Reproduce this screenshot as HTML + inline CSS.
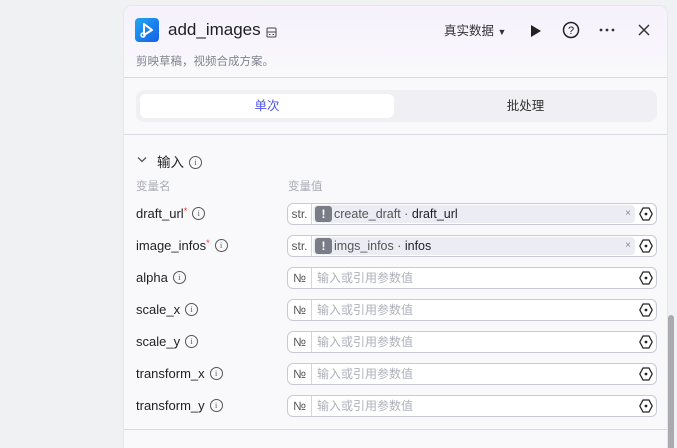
<!DOCTYPE html>
<html><head><meta charset="utf-8">
<style>
*{margin:0;padding:0;box-sizing:border-box}
html,body{width:677px;height:448px;overflow:hidden}
body{background:#f0f1f3;font-family:"Liberation Sans","Noto Sans CJK SC",sans-serif;position:relative;color:#1d1f24}
.panel{position:absolute;left:123px;top:5px;width:545px;height:443px;background:#f9f9fb;border-radius:9px 9px 0 0;border:1px solid #e6e7ec;border-bottom:none;overflow:hidden}
.hdr{position:absolute;left:0;top:0;width:100%;height:72px;background:linear-gradient(180deg,#f6f1fc,#f9f9fb)}
.a{position:absolute;white-space:nowrap}
.line{position:absolute;left:0;width:100%;height:1px;background:#d9dae3}
.lbl{font-size:13px;color:#1d1f24}
.info{display:inline-block;position:relative;top:-1px;width:13px;height:13px;border:1px solid #555;border-radius:50%;font-size:8px;line-height:11px;text-align:center;color:#555;vertical-align:middle;margin-left:5px;font-family:"Liberation Serif",serif}
.box{position:absolute;left:163px;width:370px;height:22px;border:1px solid #c9cad6;border-radius:6px;background:#fff}
.tp{position:absolute;left:0;top:0;width:24px;height:20px;border-right:1px solid #d4d5de;font-size:12px;color:#555;text-align:center;line-height:20px}
.ph{position:absolute;left:29px;top:0;line-height:20px;font-size:12px;color:#aeb0bb}
.tgt{position:absolute;right:3px;top:3px;width:14px;height:14px}
.chip{position:absolute;left:25px;top:1px;width:322px;height:18px;background:#ecedf4;border-radius:4px}
.ex{position:absolute;left:2px;top:1px;width:17px;height:16px;background:#7a7d88;border-radius:3px;color:#fff;font-size:12px;font-weight:bold;text-align:center;line-height:16px}
.ct{position:absolute;left:21px;top:0;line-height:18px;font-size:12.5px;color:#555}
.ct b{color:#1d1f24;font-weight:normal}
.x{position:absolute;right:4px;top:0;line-height:18px;font-size:10px;color:#888}
</style></head><body>
<div class="panel">
<div class="hdr"></div>
<svg class="a" style="left:11px;top:12px" width="24" height="24" viewBox="0 0 24 24"><defs><linearGradient id="g" x1="0" y1="0" x2="1" y2="1"><stop offset="0" stop-color="#22a6f2"/><stop offset="1" stop-color="#1560e8"/></linearGradient></defs><rect width="24" height="24" rx="4" fill="url(#g)"/><path d="M9 6 L17 12 L9 17 Z" fill="none" stroke="#fff" stroke-width="2" stroke-linejoin="round"/><circle cx="8" cy="17" r="2" fill="none" stroke="#fff" stroke-width="1.5"/></svg>
<div class="a" style="left:44px;top:14px;font-size:17px;color:#1d1f24">add_images</div>
<svg class="a" style="left:142px;top:21px" width="11" height="11" viewBox="0 0 11 11"><rect x="1" y="1" width="9" height="9" rx="1" fill="none" stroke="#444" stroke-width="1"/><path d="M1 5H10M3 7.5h1.5M6.5 7.5H8" stroke="#444" stroke-width="1"/></svg>
<div class="a" style="left:12px;top:47px;font-size:11.5px;color:#80838e">剪映草稿，视频合成方案。</div>
<div class="a" style="left:320px;top:14px;font-size:12.5px;color:#333">真实数据 <span style="font-size:9px">▼</span></div>
<svg class="a" style="left:406px;top:18px" width="12" height="14"><path d="M1 1 L11 7 L1 13Z" fill="#222"/></svg>
<svg class="a" style="left:438px;top:15px" width="18" height="18"><circle cx="9" cy="9" r="7.5" fill="none" stroke="#222" stroke-width="1.5"/><text x="9" y="13" font-size="11" text-anchor="middle" fill="#222" font-family="Liberation Sans">?</text></svg>
<svg class="a" style="left:475px;top:22px" width="16" height="4"><circle cx="2" cy="2" r="1.4" fill="#333"/><circle cx="8" cy="2" r="1.4" fill="#333"/><circle cx="14" cy="2" r="1.4" fill="#333"/></svg>
<svg class="a" style="left:513px;top:17px" width="14" height="14"><path d="M2 2L12 12M12 2L2 12" stroke="#333" stroke-width="1.5"/></svg>
<div class="line" style="top:71px"></div>
<div class="a" style="left:12px;top:84px;width:521px;height:32px;background:#f0f0f4;border-radius:8px"></div>
<div class="a" style="left:16px;top:88px;width:254px;height:24px;background:#fff;border-radius:6px;text-align:center;line-height:24px;font-size:12.5px;color:#4d53e8">单次</div>
<div class="a" style="left:270px;top:88px;width:263px;height:24px;text-align:center;line-height:24px;font-size:12.5px;color:#333">批处理</div>
<div class="line" style="top:128px"></div>
<svg class="a" style="left:13px;top:150px" width="10" height="7"><path d="M1 1.5L5 5.5L9 1.5" fill="none" stroke="#555" stroke-width="1.3"/></svg>
<div class="a lbl" style="left:33px;top:145px;font-size:13.5px">输入<span class="info">i</span></div>
<div class="a" style="left:12px;top:172px;font-size:11.5px;color:#a9abb5">变量名</div>
<div class="a" style="left:164px;top:172px;font-size:11.5px;color:#a9abb5">变量值</div>

<div class="a lbl" style="left:12px;top:200px">draft_url<span style="color:#e33;font-size:9px;vertical-align:4px">*</span><span class="info">i</span></div>
<div class="box" style="top:197px"><div class="tp">str.</div><div class="chip"><div class="ex">!</div><div class="ct">create_draft · <b>draft_url</b></div><div class="x">×</div></div><svg class="tgt" viewBox="0 0 14 14"><path d="M4 1 H10 L13.2 7 L10 13 H4 L0.8 7Z" fill="none" stroke="#222" stroke-width="1.3" stroke-linejoin="round"/><circle cx="7" cy="7" r="1.4" fill="#222"/></svg></div>

<div class="a lbl" style="left:12px;top:232px">image_infos<span style="color:#e33;font-size:9px;vertical-align:4px">*</span><span class="info">i</span></div>
<div class="box" style="top:229px"><div class="tp">str.</div><div class="chip"><div class="ex">!</div><div class="ct">imgs_infos · <b>infos</b></div><div class="x">×</div></div><svg class="tgt" viewBox="0 0 14 14"><path d="M4 1 H10 L13.2 7 L10 13 H4 L0.8 7Z" fill="none" stroke="#222" stroke-width="1.3" stroke-linejoin="round"/><circle cx="7" cy="7" r="1.4" fill="#222"/></svg></div>

<div class="a lbl" style="left:12px;top:264px">alpha<span class="info">i</span></div>
<div class="box" style="top:261px"><div class="tp">№</div><div class="ph">输入或引用参数值</div><svg class="tgt" viewBox="0 0 14 14"><path d="M4 1 H10 L13.2 7 L10 13 H4 L0.8 7Z" fill="none" stroke="#222" stroke-width="1.3" stroke-linejoin="round"/><circle cx="7" cy="7" r="1.4" fill="#222"/></svg></div>

<div class="a lbl" style="left:12px;top:296px">scale_x<span class="info">i</span></div>
<div class="box" style="top:293px"><div class="tp">№</div><div class="ph">输入或引用参数值</div><svg class="tgt" viewBox="0 0 14 14"><path d="M4 1 H10 L13.2 7 L10 13 H4 L0.8 7Z" fill="none" stroke="#222" stroke-width="1.3" stroke-linejoin="round"/><circle cx="7" cy="7" r="1.4" fill="#222"/></svg></div>

<div class="a lbl" style="left:12px;top:328px">scale_y<span class="info">i</span></div>
<div class="box" style="top:325px"><div class="tp">№</div><div class="ph">输入或引用参数值</div><svg class="tgt" viewBox="0 0 14 14"><path d="M4 1 H10 L13.2 7 L10 13 H4 L0.8 7Z" fill="none" stroke="#222" stroke-width="1.3" stroke-linejoin="round"/><circle cx="7" cy="7" r="1.4" fill="#222"/></svg></div>

<div class="a lbl" style="left:12px;top:360px">transform_x<span class="info">i</span></div>
<div class="box" style="top:357px"><div class="tp">№</div><div class="ph">输入或引用参数值</div><svg class="tgt" viewBox="0 0 14 14"><path d="M4 1 H10 L13.2 7 L10 13 H4 L0.8 7Z" fill="none" stroke="#222" stroke-width="1.3" stroke-linejoin="round"/><circle cx="7" cy="7" r="1.4" fill="#222"/></svg></div>

<div class="a lbl" style="left:12px;top:392px">transform_y<span class="info">i</span></div>
<div class="box" style="top:389px"><div class="tp">№</div><div class="ph">输入或引用参数值</div><svg class="tgt" viewBox="0 0 14 14"><path d="M4 1 H10 L13.2 7 L10 13 H4 L0.8 7Z" fill="none" stroke="#222" stroke-width="1.3" stroke-linejoin="round"/><circle cx="7" cy="7" r="1.4" fill="#222"/></svg></div>

<div class="line" style="top:423px"></div>
<div class="a lbl" style="left:33px;top:438px;font-size:13.5px">输出<span class="info">i</span></div>
</div>
<div class="a" style="left:668px;top:315px;width:6px;height:140px;background:#a9abb0;border-radius:3px"></div>
</body></html>
